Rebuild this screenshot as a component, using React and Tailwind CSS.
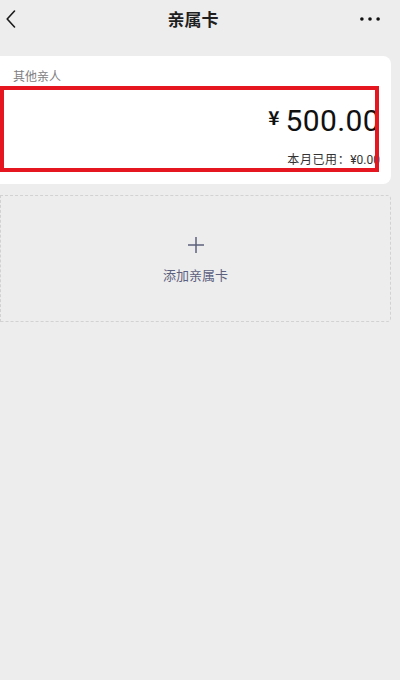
const App = () => {
  return (
    <div className="w-[400px] h-[680px] bg-[#ededed] overflow-hidden font-['Noto_Sans_CJK_SC','Noto_Sans',sans-serif]">
      {/* Header */}
      <div className="flex items-center h-[38px]">
        <div className="w-[53px] pl-[6px] flex items-center">
          <svg width="10" height="18" viewBox="0 0 10 18" fill="none">
            <path d="M8.5 1 L1.2 9 L8.5 17" stroke="#1a1a1a" strokeWidth="1.6" strokeLinecap="round" strokeLinejoin="round" />
          </svg>
        </div>
        <div className="flex-1 text-center text-[17px] font-bold text-[#1f1f1f] leading-[22px]">亲属卡</div>
        <div className="w-[67px] pr-[20px] flex justify-end">
          <svg width="20" height="4" viewBox="0 0 20 4">
            <circle cx="1.9" cy="2" r="1.8" fill="#111" />
            <circle cx="10" cy="2" r="1.8" fill="#111" />
            <circle cx="18.1" cy="2" r="1.8" fill="#111" />
          </svg>
        </div>
      </div>

      {/* Card */}
      <div className="relative mt-[18px] w-[391px] bg-white rounded-r-[8px] pt-[12px] pb-[17px]">
        <div className="pl-[13px] text-[12px] leading-[16px] text-[#808080]">其他亲人</div>
        <div className="mt-[21px] h-[32px] flex items-start justify-end pr-[11px] text-[#111] leading-[32px]">
          <span className="text-[19px] leading-[24px] font-bold mr-[6px]">¥</span>
          <span className="text-[30px] font-['Roboto',sans-serif] tracking-[0.4px]">500.00</span>
        </div>
        <div className="mt-[14px] h-[16px] pr-[11px] text-right text-[12px] leading-[16px] text-[#333] tracking-[0.6px]">
          本月已用：<span className="font-['Roboto',sans-serif] tracking-normal">¥0.00</span>
        </div>

        {/* highlight frame */}
        <div className="absolute left-0 top-[30px] w-[379px] h-[86px] border-4 border-[#e5161f]" />
      </div>

      {/* Add card */}
      <div className="mt-[11px] w-[391px] h-[127px] border border-dashed border-[#d2d2d2] rounded-r-[4px] flex flex-col items-center justify-center">
        <svg width="16" height="16" viewBox="0 0 16 16" className="mt-[2px]">
          <path d="M8 0 V16 M0 8 H16" stroke="#5d627c" strokeWidth="1.5" />
        </svg>
        <div className="mt-[13px] text-[13px] leading-[17px] text-[#5d6180]">添加亲属卡</div>
      </div>
    </div>
  );
};

export default App;
